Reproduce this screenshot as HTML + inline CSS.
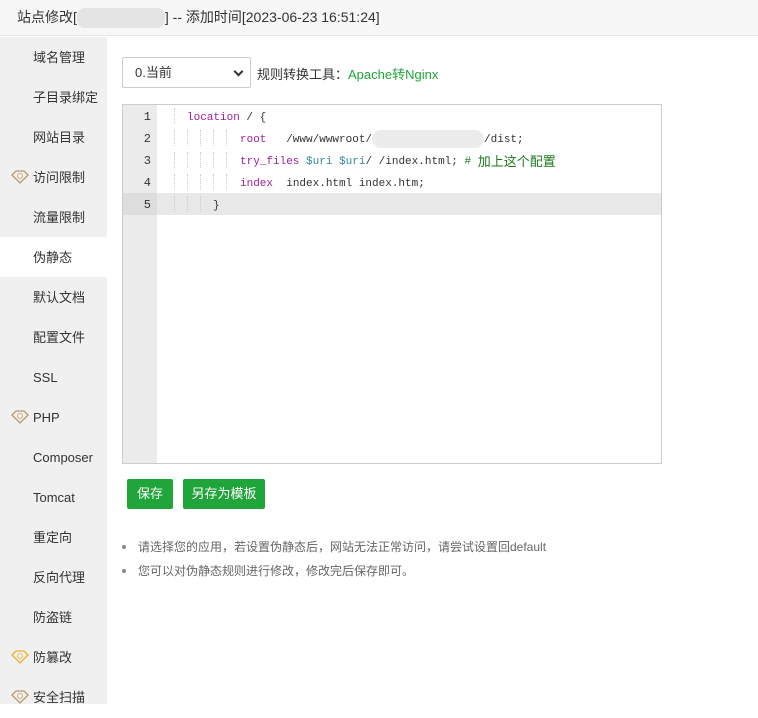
<!DOCTYPE html>
<html><head><meta charset="utf-8"><style>
*{margin:0;padding:0;box-sizing:border-box}
body{width:758px;height:704px;overflow:hidden;background:#fff;font-family:"Liberation Sans","Noto Sans CJK SC",sans-serif;font-size:13px;color:#333;position:relative}
.hd{position:absolute;left:0;top:0;width:758px;height:36px;background:#f7f7f7;border-bottom:1px solid #e6e6e6;font-size:14px;line-height:34px;padding-left:17px;color:#333}
.blur{display:inline-block;width:88px;height:20px;background:#e4e4e4;vertical-align:middle;border-radius:8px}
.sb{position:absolute;left:0;top:37px;width:107px;height:667px;background:#f0f0f0}
.sb div{height:40px;line-height:41px;padding-left:33px;position:relative;color:#333}
.sb div.act{background:#fff}
.gem{position:absolute;left:11px;top:13px}
.sel{position:absolute;left:122px;top:57px;width:129px;height:31px;border:1px solid #ccc;border-radius:2px;line-height:29px;padding-left:12px;font-size:13px}
.sel:after{content:"";position:absolute;right:8px;top:10px;width:5px;height:5px;border-right:2px solid #333;border-bottom:2px solid #333;transform:rotate(45deg)}
.tool{position:absolute;left:257px;top:64px;font-size:13px}
.tool span{color:#20a53a}
.ed{position:absolute;left:122px;top:104px;width:540px;height:360px;border:1px solid #ccc;background:#fff}
.gut{position:absolute;left:0;top:0;width:34px;height:358px;background:#ebebeb}
.ln{position:absolute;left:0;width:538px;height:22px;line-height:22px;font-family:"Liberation Mono",monospace;font-size:11px;color:#333;white-space:pre;overflow:hidden}
.ln .n{position:absolute;left:0;top:1px;width:28px;text-align:right;color:#333;font-size:12px}
.ln .c{position:absolute;left:64px;top:2px;height:22px}
.k{color:#a020a0}.v{color:#2f8ba0}.cm{color:#1a7a1a}
.hl{background:#e8e8e8}
.hl .n{background:#ddd;width:34px;padding-right:6px;top:0;line-height:24px;height:22px}
.g{position:absolute;top:3px;height:16px;border-left:1px dotted #ccc}
.btn{position:absolute;top:479px;height:30px;line-height:30px;background:#20a53a;color:#fff;border-radius:2px;text-align:center;font-size:13px}
.tips{position:absolute;left:122px;top:535px;font-size:12px;color:#666;line-height:24px;list-style:none}
.tips li:before{content:"";display:inline-block;width:4px;height:4px;border-radius:50%;background:#888;margin:0 12px 2px 0;vertical-align:middle}
</style></head><body>
<div class="hd">站点修改[<span class="blur"></span>] -- 添加时间[2023-06-23 16:51:24]</div>
<div class="sb">
<div>域名管理</div><div>子目录绑定</div><div>网站目录</div>
<div><svg class="gem" width="18" height="14" viewBox="0 0 18 14"><path d="M1 5L5 1H13L17 5L9 13Z" fill="none" stroke="#b99a6a" stroke-width="1.3"/><circle cx="9" cy="6" r="2.5" fill="none" stroke="#b99a6a" stroke-width="0.8"/></svg>访问限制</div>
<div>流量限制</div><div class="act">伪静态</div><div>默认文档</div><div>配置文件</div><div>SSL</div>
<div><svg class="gem" width="18" height="14" viewBox="0 0 18 14"><path d="M1 5L5 1H13L17 5L9 13Z" fill="none" stroke="#b99a6a" stroke-width="1.3"/><circle cx="9" cy="6" r="2.5" fill="none" stroke="#b99a6a" stroke-width="0.8"/></svg>PHP</div>
<div>Composer</div><div>Tomcat</div><div>重定向</div><div>反向代理</div><div>防盗链</div>
<div><svg class="gem" width="18" height="14" viewBox="0 0 18 14"><path d="M1 5L5 1H13L17 5L9 13Z" fill="none" stroke="#f0b030" stroke-width="1.3"/><circle cx="9" cy="6" r="2.5" fill="none" stroke="#f0b030" stroke-width="0.8"/></svg>防篡改</div>
<div><svg class="gem" width="18" height="14" viewBox="0 0 18 14"><path d="M1 5L5 1H13L17 5L9 13Z" fill="none" stroke="#b99a6a" stroke-width="1.3"/><circle cx="9" cy="6" r="2.5" fill="none" stroke="#b99a6a" stroke-width="0.8"/></svg>安全扫描</div>
</div>
<div class="sel">0.当前</div>
<div class="tool">规则转换工具：<span>Apache转Nginx</span></div>
<div class="ed"><div class="gut"></div>
<div class="ln" style="top:0"><span class="n">1</span><span class="g" style="left:51px"></span><span class="c"><span class="k">location</span> / {</span></div>
<div class="ln" style="top:22px"><span class="n">2</span><span class="g" style="left:51px"></span><span class="g" style="left:64px"></span><span class="g" style="left:77px"></span><span class="g" style="left:90px"></span><span class="g" style="left:103px"></span><span class="c" style="left:117px"><span class="k">root</span>   /www/wwwroot/<span style="display:inline-block;width:112px;height:18px;background:#ececec;border-radius:9px;vertical-align:middle"></span>/dist;</span></div>
<div class="ln" style="top:44px"><span class="n">3</span><span class="g" style="left:51px"></span><span class="g" style="left:64px"></span><span class="g" style="left:77px"></span><span class="g" style="left:90px"></span><span class="g" style="left:103px"></span><span class="c" style="left:117px"><span class="k">try_files</span> <span class="v">$uri</span> <span class="v">$uri</span>/ /index.html; <span class="cm"># <span style="font-family:'Noto Sans CJK SC',sans-serif;font-size:13px;line-height:18px;vertical-align:top;display:inline-block;margin-top:1px">加上这个配置</span></span></span></div>
<div class="ln" style="top:66px"><span class="n">4</span><span class="g" style="left:51px"></span><span class="g" style="left:64px"></span><span class="g" style="left:77px"></span><span class="g" style="left:90px"></span><span class="g" style="left:103px"></span><span class="c" style="left:117px"><span class="k">index</span>  index.html index.htm;</span></div>
<div class="ln hl" style="top:88px"><span class="n">5</span><span class="g" style="left:51px"></span><span class="g" style="left:64px"></span><span class="g" style="left:77px"></span><span class="c" style="left:90px">}</span></div>
</div>
<div class="btn" style="left:127px;width:46px">保存</div>
<div class="btn" style="left:183px;width:82px">另存为模板</div>
<ul class="tips"><li>请选择您的应用，若设置伪静态后，网站无法正常访问，请尝试设置回default</li><li>您可以对伪静态规则进行修改，修改完后保存即可。</li></ul>
</body></html>
